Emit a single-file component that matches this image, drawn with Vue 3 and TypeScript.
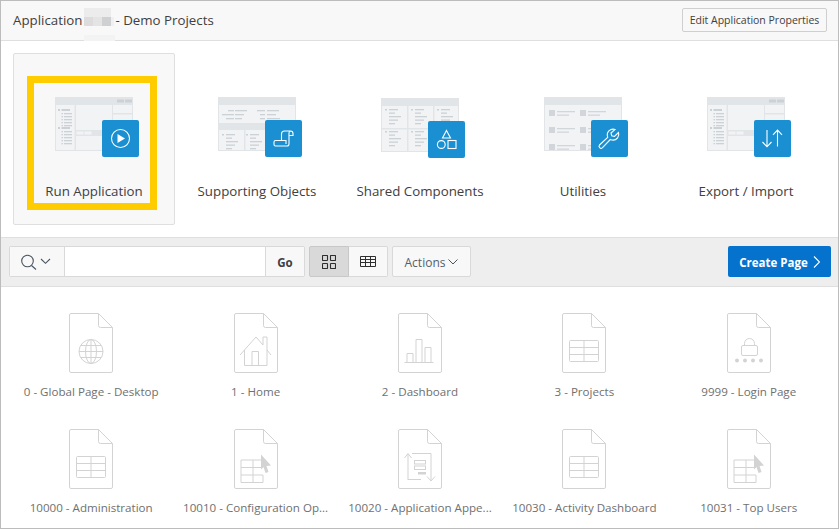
<script setup lang="ts">
interface Tile { label: string; thumb: string; badge: string; active?: boolean }
interface Page { label: string; glyph: string }

const tiles: Tile[] = [
  { label: 'Run Application', thumb: 'app', badge: 'play', active: true },
  { label: 'Supporting Objects', thumb: 'split', badge: 'scroll' },
  { label: 'Shared Components', thumb: 'cards', badge: 'shapes' },
  { label: 'Utilities', thumb: 'list', badge: 'wrench' },
  { label: 'Export / Import', thumb: 'app', badge: 'arrows' }
]

const pages: Page[] = [
  { label: '0 - Global Page - Desktop', glyph: 'globe' },
  { label: '1 - Home', glyph: 'home' },
  { label: '2 - Dashboard', glyph: 'chart' },
  { label: '3 - Projects', glyph: 'table' },
  { label: '9999 - Login Page', glyph: 'lock' },
  { label: '10000 - Administration', glyph: 'table' },
  { label: '10010 - Configuration Op...', glyph: 'cursor' },
  { label: '10020 - Application Appe...', glyph: 'flow' },
  { label: '10030 - Activity Dashboard', glyph: 'table' },
  { label: '10031 - Top Users', glyph: 'cursor' }
]

const appRows: number[] = [16, 19, 22, 25, 28, 34, 37, 40, 43, 46]
const splitCols: number[] = [2, 26]
const cardCols: number[] = [1, 27, 53]
const cardRows: number[] = [10, 32]
const listRows: number[] = [13, 30, 47]
const listCols: number[] = [5, 36]
</script>

<template>
  <div class="page">
    <header class="head">
      <h1 class="title">
        <span>Application</span>
        <span class="mosaic" aria-hidden="true"><i></i><i></i><i></i><i></i><i></i><i></i><i></i><i></i></span>
        <span>- Demo Projects</span>
      </h1>
      <button class="edit">Edit Application Properties</button>
    </header>

    <section class="tiles">
      <a v-for="t in tiles" :key="t.label" class="tile" :class="{ on: t.active }">
        <span class="art" :class="t.thumb">
          <svg class="thumb" width="78" height="54" viewBox="0 0 78 54">
            <rect x="0.5" y="0.5" width="77" height="53" fill="#f2f3f5" stroke="#e2e5e8" />
            <rect x="0" y="0" width="78" height="8" fill="#e2e5e8" />
            <g v-if="t.thumb === 'app'">
              <rect x="62" y="2.5" width="7" height="3" fill="#ccd1d5" />
              <rect x="70" y="2.5" width="7" height="3" fill="#ccd1d5" />
              <rect x="19.5" y="8" width="1.5" height="46" fill="#e2e5e8" />
              <rect x="57" y="8" width="1" height="46" fill="#e2e5e8" />
              <rect x="58" y="16" width="20" height="1.5" fill="#e2e5e8" />
              <rect x="58" y="25" width="20" height="1.5" fill="#e2e5e8" />
              <rect x="21" y="33" width="37" height="6" fill="#e2e5e8" />
              <rect x="21.5" y="34.5" width="7" height="3" fill="#f2f3f5" />
              <rect x="29.5" y="34.5" width="7" height="3" fill="#f2f3f5" />
              <rect x="3" y="12" width="2" height="2" fill="#ccd1d5" />
              <rect x="6.5" y="12" width="8.5" height="2" fill="#ccd1d5" />
              <rect x="3" y="30" width="2" height="2" fill="#ccd1d5" />
              <rect x="6.5" y="30" width="8.5" height="2" fill="#ccd1d5" />
              <g v-for="y in appRows" :key="y">
                <rect x="6.5" :y="y" width="1.5" height="1.3" fill="#ccd1d5" />
                <rect x="9" :y="y" width="8" height="1.3" fill="#ccd1d5" />
              </g>
            </g>
            <g v-else-if="t.thumb === 'split'">
              <rect x="0" y="26" width="78" height="7" fill="#e2e5e8" />
              <rect x="26" y="33" width="1.5" height="21" fill="#e2e5e8" />
              <rect x="51" y="33" width="1.5" height="21" fill="#e2e5e8" />
              <rect x="10" y="13" width="6" height="1.3" fill="#ccd1d5" />
              <rect x="17" y="13" width="12" height="1.3" fill="#ccd1d5" />
              <rect x="4" y="17" width="12" height="1.3" fill="#ccd1d5" />
              <rect x="17" y="17" width="9" height="1.3" fill="#ccd1d5" />
              <rect x="8" y="21" width="8" height="1.3" fill="#ccd1d5" />
              <rect x="17" y="21" width="7" height="1.3" fill="#ccd1d5" />
              <rect x="39" y="13" width="8" height="1.3" fill="#ccd1d5" />
              <rect x="49" y="13" width="12" height="1.3" fill="#ccd1d5" />
              <rect x="42" y="17" width="5" height="1.3" fill="#ccd1d5" />
              <rect x="49" y="17" width="9" height="1.3" fill="#ccd1d5" />
              <rect x="42" y="21" width="5" height="1.3" fill="#ccd1d5" />
              <rect x="49" y="21" width="13" height="1.3" fill="#ccd1d5" />
              <g v-for="x in splitCols" :key="x">
                <rect :x="x + 2" y="37" width="2" height="1.5" fill="#ccd1d5" />
                <rect :x="x + 6" y="37" width="9" height="1.3" fill="#ccd1d5" />
                <rect :x="x + 6" y="40.5" width="6" height="1.3" fill="#ccd1d5" />
                <rect :x="x + 6" y="44" width="12" height="1.3" fill="#ccd1d5" />
                <rect :x="x + 6" y="47.5" width="9" height="1.3" fill="#ccd1d5" />
                <rect :x="x + 6" y="51" width="6" height="1.3" fill="#ccd1d5" />
              </g>
            </g>
            <g v-else-if="t.thumb === 'cards'">
              <rect x="26" y="8" width="1.5" height="46" fill="#e2e5e8" />
              <rect x="52" y="8" width="1.5" height="46" fill="#e2e5e8" />
              <rect x="0" y="30" width="78" height="1.5" fill="#e2e5e8" />
              <g v-for="x in cardCols" :key="x">
                <g v-for="y in cardRows" :key="y">
                  <rect :x="x + 3" :y="y + 1" width="2" height="1.5" fill="#ccd1d5" />
                  <rect :x="x + 7" :y="y + 1" width="9" height="1.3" fill="#ccd1d5" />
                  <rect :x="x + 7" :y="y + 4.5" width="6" height="1.3" fill="#ccd1d5" />
                  <rect :x="x + 7" :y="y + 8" width="12" height="1.3" fill="#ccd1d5" />
                  <rect :x="x + 7" :y="y + 11.5" width="9" height="1.3" fill="#ccd1d5" />
                  <rect :x="x + 7" :y="y + 15" width="6" height="1.3" fill="#ccd1d5" />
                </g>
              </g>
            </g>
            <g v-else>
              <g v-for="x in listCols" :key="x">
                <g v-for="y in listRows" :key="y">
                  <rect :x="x" :y="y" width="6" height="6" fill="#d2d6da" />
                  <rect :x="x + 8" :y="y + 1" width="18" height="1.3" fill="#d2d6da" />
                  <rect :x="x + 8" :y="y + 4.5" width="12" height="1.3" fill="#d2d6da" />
                </g>
              </g>
            </g>
          </svg>
          <span class="badge">
            <svg width="37" height="37" viewBox="0 0 37 37" fill="none" stroke="#fff" stroke-width="1.1">
              <g v-if="t.badge === 'play'">
                <circle cx="18.5" cy="18.5" r="9" />
                <path d="M15.5 14v9l7.5-4.5z" fill="#fff" stroke="none" />
              </g>
              <path
                v-else-if="t.badge === 'scroll'"
                d="M16.5 20.5V14a3 3 0 0 1 3-3h6a2.500 2.500 0 0 1 2.500 2.500v2H24M25.500 11a2 2 0 0 0-1.500 2v11a2 2 0 0 1-2 2H10.500A1.500 1.500 0 0 1 9 24.500V22a1.500 1.500 0 0 1 1.500-1.500H21V24"
              />
              <g v-else-if="t.badge === 'shapes'">
                <path d="M18.500 9.500l4 7.500h-8z" />
                <circle cx="13.300" cy="23.500" r="3.900" />
                <rect x="20" y="19.500" width="8" height="8" />
              </g>
              <path
                v-else-if="t.badge === 'wrench'"
                d="M27.500 12.500l-4 4-2.800-.7-.7-2.800 4-3.500c-3-1-6.500.5-7.500 3.500-.5 1.500-.3 3 .2 4.300l-8.200 7.700c-1.500 1.700 1 4.300 2.800 2.800l8-8.300c2.500 1 5.500.5 7.300-1.700 1.300-1.500 1.500-3.500.9-5.300z"
              />
              <g v-else>
                <path d="M13 10v16.500M8.500 22l4.500 4.800 4.500-4.800" />
                <path d="M23.500 26.500V10M19 14.800l4.500-4.800 4.500 4.800" />
              </g>
            </svg>
          </span>
        </span>
        <span class="tile-label">{{ t.label }}</span>
      </a>
    </section>

    <section class="bar">
      <div class="search">
        <button class="search-menu" aria-label="Search">
          <svg width="32" height="18" viewBox="0 0 32 18" fill="none" stroke="#4a5560" stroke-width="1.100">
            <circle cx="6.500" cy="8" r="5.800" />
            <path d="M10.500 12.500l4.500 4" />
            <path d="M20 6l4.500 4.300L29 6" />
          </svg>
        </button>
        <input class="search-input" type="text" />
        <button class="go">Go</button>
      </div>
      <div class="views">
        <button class="view selected" aria-label="Icons">
          <svg width="14" height="14" viewBox="0 0 14 14" fill="none" stroke="#2e2e2e" stroke-width="1.100">
            <rect x="0.500" y="0.500" width="5" height="5" rx="0.500" />
            <rect x="8.500" y="0.500" width="5" height="5" rx="0.500" />
            <rect x="0.500" y="8.500" width="5" height="5" rx="0.500" />
            <rect x="8.500" y="8.500" width="5" height="5" rx="0.500" />
          </svg>
        </button>
        <button class="view" aria-label="Report">
          <svg width="16" height="11" viewBox="0 0 16 11" fill="none" stroke="#2e2e2e" stroke-width="1">
            <path d="M.500.500h15v10h-15zM.500 3.500h15M.500 6.500h15M5.500 1v9.500M10.500 1v9.500" />
          </svg>
        </button>
      </div>
      <button class="actions">
        Actions
        <svg width="10" height="6" viewBox="0 0 10 6" fill="none" stroke="#4a5560" stroke-width="1">
          <path d="M.500.500l4.500 4.500 4.500-4.500" />
        </svg>
      </button>
      <button class="create">
        Create Page
        <svg width="7" height="12" viewBox="0 0 7 12" fill="none" stroke="#fff" stroke-width="1.100">
          <path d="M1 .500l5.500 5.500-5.500 5.500" />
        </svg>
      </button>
    </section>

    <section class="grid">
      <a v-for="p in pages" :key="p.label" class="item">
        <svg width="44" height="60" viewBox="0 0 44 60" fill="none" stroke="#d3d3d3" stroke-width="1">
          <path d="M29.500.500H2A1.500 1.500 0 0 0 .500 2v56A1.500 1.500 0 0 0 2 59.500h40a1.500 1.500 0 0 0 1.500-1.500V14.500zM29.500.500v12a2 2 0 0 0 2 2h12" />
          <g v-if="p.glyph === 'globe'">
            <circle cx="22" cy="38.500" r="12" />
            <ellipse cx="22" cy="38.500" rx="5.500" ry="12" />
            <path d="M22 26.500v24M10 38.500h24M11.500 32.500h21M11.500 44.500h21" />
          </g>
          <path
            v-else-if="p.glyph === 'home'"
            d="M6 42l16-18 7 8v-8h4v13l4 5M10.500 37v15.500h22.500V37M18 52.500V38.500h6.500v14"
          />
          <g v-else-if="p.glyph === 'chart'">
            <path d="M6.500 49.500h29" />
            <path d="M9 49.500v-9h6v9M18 49.500v-23h6v23M27 49.500v-15h6v15" />
          </g>
          <g v-else-if="p.glyph === 'table'">
            <rect x="7.500" y="27.500" width="29" height="21" rx="1" />
            <path d="M7.500 34.500h29M7.500 41.500h29M22 27.500v21" />
          </g>
          <g v-else-if="p.glyph === 'lock'">
            <rect x="14.500" y="32.500" width="16" height="10" rx="1.500" />
            <path d="M17.500 32.500v-2a5 5 0 0 1 10 0v2" />
            <g fill="#d3d3d3" stroke="none">
              <circle cx="10" cy="47.500" r="2" />
              <circle cx="18" cy="47.500" r="2" />
              <circle cx="26" cy="47.500" r="2" />
              <circle cx="34" cy="47.500" r="2" />
            </g>
          </g>
          <g v-else-if="p.glyph === 'cursor'">
            <path d="M29.500 37.500v-6.500H7v22.500h22V46M7 38.500h22M7 46h22M19 31v22.500" />
            <path d="M27 25.500l10 11-4.500.5 2 6-3 1-2-6-2.500 2.500z" fill="#d3d3d3" stroke="none" />
          </g>
          <g v-else>
            <path d="M10 51V25M6.500 29l3.500-4.500 3.500 4.500M10 50.500h13M14 24.500h19V51M29 47.500l4 4.500 4-4.500" />
            <rect x="16.500" y="31.500" width="11" height="3.500" />
            <rect x="16.500" y="37" width="11" height="3.500" />
            <rect x="20" y="43" width="8" height="2.500" fill="#d3d3d3" stroke="none" />
          </g>
        </svg>
        <span class="item-label">{{ p.label }}</span>
      </a>
    </section>

    <div class="highlight" aria-hidden="true"></div>
  </div>
</template>

<style>
html, body { margin: 0; background: #fff; }
</style>

<style scoped>
.page {
  position: relative;
  box-sizing: border-box;
  width: 839px;
  height: 529px;
  border: 1px solid #bcbcbc;
  overflow: hidden;
  font-family: "Open Sans", "Liberation Sans", sans-serif;
  color: #404040;
  background: #fff;
}
button { font-family: inherit; cursor: pointer; }

.head {
  display: flex;
  align-items: center;
  justify-content: space-between;
  box-sizing: border-box;
  height: 40px;
  padding: 0 11px 1px 12px;
  background: #f8f8f8;
  border-bottom: 1px solid #dfdfdf;
}
.title {
  display: flex;
  align-items: center;
  margin: 0;
  font-size: 13.300px;
  font-weight: 400;
  color: #404040;
}
.mosaic {
  position: relative;
  display: grid;
  grid-template-columns: 9px 9px 9px 3px;
  grid-auto-rows: 9px;
  margin: 0 1px 6px 2px;
}
.mosaic::after {
  content: "";
  position: absolute;
  left: 0;
  top: 27px;
  width: 31px;
  height: 6px;
  background: #f3f3f3;
}
.mosaic i:nth-child(1), .mosaic i:nth-child(2), .mosaic i:nth-child(3) { background: #ececec; }
.mosaic i:nth-child(5) { background: #dcdcdc; }
.mosaic i:nth-child(6) { background: #e4e4e4; }
.mosaic i:nth-child(7) { background: #cfd0d2; }
.mosaic i:nth-child(8) { background: #f0f0f0; }
.edit {
  box-sizing: border-box;
  width: 145px;
  height: 24px;
  padding: 0;
  font-size: 10.500px;
  color: #404040;
  background: #f8f8f8;
  border: 1px solid #cfcfcf;
  border-radius: 2px;
}

.tiles {
  display: grid;
  grid-template-columns: repeat(5, 163px);
  box-sizing: border-box;
  height: 197px;
  padding: 12px 12px 0;
  border-bottom: 1px solid #dfdfdf;
}
.tile {
  display: flex;
  flex-direction: column;
  align-items: center;
  box-sizing: border-box;
  width: 162px;
  height: 172px;
  margin-left: 0;
  padding-top: 43px;
  border: 1px solid transparent;
  border-radius: 2px;
}
.tile.on {
  background: #f8f8f8;
  border-color: #dfdfdf;
}
.art {
  position: relative;
  display: block;
  width: 78px;
  height: 60px;
}
.art.cards { margin-top: 1px; margin-bottom: -1px; }
.thumb { display: block; }
.badge {
  position: absolute;
  left: 47px;
  top: 23px;
  width: 37px;
  height: 37px;
  background: #1a8fd1;
  border-radius: 2px;
}
.badge svg { display: block; }
.tile-label {
  margin-top: 25px;
  font-size: 13.300px;
  line-height: 18px;
  color: #404040;
  white-space: nowrap;
}

.bar {
  display: flex;
  align-items: center;
  box-sizing: border-box;
  height: 49px;
  padding: 0 7px 1px 8px;
  background: #eeeeee;
  border-bottom: 1px solid #dfdfdf;
}
.search {
  display: flex;
  width: 296px;
  height: 31px;
  box-sizing: border-box;
  background: #f8f8f8;
  border: 1px solid #d9d9d9;
  border-radius: 2px;
}
.search-menu {
  display: flex;
  align-items: center;
  justify-content: center;
  width: 55px;
  padding: 0;
  background: #f8f8f8;
  border: 0;
  border-right: 1px solid #d9d9d9;
}
.search-input {
  flex: 1;
  min-width: 0;
  padding: 0;
  background: #fff;
  border: 0;
  outline: 0;
}
.go {
  width: 39px;
  padding: 1px 0 0;
  font-size: 11.500px;
  font-weight: 700;
  color: #404040;
  background: #f8f8f8;
  border: 0;
  border-left: 1px solid #d9d9d9;
}
.views {
  display: flex;
  height: 31px;
  margin-left: 4px;
}
.view {
  display: flex;
  align-items: center;
  justify-content: center;
  box-sizing: border-box;
  width: 39px;
  padding: 0;
  background: #f8f8f8;
  border: 1px solid #d9d9d9;
  border-left-width: 0;
}
.view.selected {
  width: 40px;
  background: #d9d9d9;
  border: 1px solid #c8c8c8;
  border-radius: 2px 0 0 2px;
}
.view:last-child { border-radius: 0 2px 2px 0; }
.actions {
  display: flex;
  align-items: center;
  justify-content: center;
  gap: 3px;
  box-sizing: border-box;
  width: 79px;
  height: 31px;
  margin-left: 4px;
  padding: 1px 0 0;
  font-size: 12px;
  color: #55606a;
  background: #f8f8f8;
  border: 1px solid #d9d9d9;
  border-radius: 2px;
}
.create {
  display: flex;
  align-items: center;
  justify-content: center;
  gap: 5px;
  box-sizing: border-box;
  width: 103px;
  height: 31px;
  margin-left: auto;
  padding: 1px 0 0;
  font-size: 11.500px;
  font-weight: 700;
  color: #fff;
  background: #0572ce;
  border: 0;
  border-radius: 2px;
}

.grid {
  display: grid;
  grid-template-columns: repeat(5, 164.400px);
  grid-auto-rows: 116px;
  padding: 26px 0 0 8px;
}
.item {
  display: flex;
  flex-direction: column;
  align-items: center;
  min-width: 0;
}
.item svg { display: block; flex: none; }
.item-label {
  margin-top: 10px;
  font-size: 11.600px;
  line-height: 17px;
  color: #707070;
  white-space: nowrap;
}

.highlight {
  position: absolute;
  left: 26px;
  top: 75px;
  box-sizing: border-box;
  width: 130px;
  height: 134px;
  border: 7px solid #ffcc00;
  pointer-events: none;
}
</style>
